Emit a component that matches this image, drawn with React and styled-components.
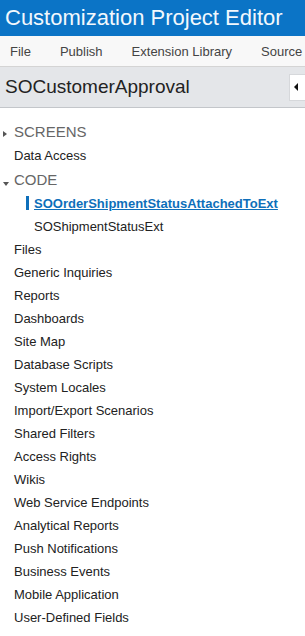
import React from "react";
import styled, { createGlobalStyle } from "styled-components";

const GlobalStyle = createGlobalStyle`
  body {
    margin: 0;
    background: #fff;
    font-family: "Liberation Sans", Arial, sans-serif;
  }
`;

const Page = styled.div`
  width: 305px;
  height: 636px;
  overflow: hidden;
  display: flex;
  flex-direction: column;
`;

const Header = styled.div`
  height: 36px;
  background: #0b74c6;
  color: #f2f8fd;
  font-size: 22px;
  line-height: 36px;
  padding-left: 5px;
  white-space: nowrap;
  flex: none;
`;

const MenuBar = styled.div`
  height: 30px;
  background: #f8f8f8;
  border-bottom: 1px solid #d4d4d4;
  display: flex;
  align-items: center;
  padding-left: 10px;
  gap: 29px;
  white-space: nowrap;
  overflow: hidden;
  flex: none;
`;

const MenuItem = styled.span`
  font-size: 13px;
  color: #444;
`;

const ProjectBar = styled.div`
  height: 40px;
  background: #e4e6e9;
  border-bottom: 1px solid #c3c6ca;
  display: flex;
  align-items: center;
  justify-content: space-between;
  padding-left: 5px;
  flex: none;
`;

const ProjectName = styled.span`
  font-size: 19px;
  color: #222;
`;

const CollapseButton = styled.div`
  width: 16px;
  height: 27px;
  background: #fff;
  border: 1px solid #d6d8db;
  border-right: none;
  display: flex;
  align-items: center;
  padding-left: 4px;
  box-sizing: border-box;
  &::before {
    content: "";
    border-top: 4px solid transparent;
    border-bottom: 4px solid transparent;
    border-right: 4px solid #111;
  }
`;

const Tree = styled.div`
  display: flex;
  flex-direction: column;
  padding-top: 11px;
`;

const Row = styled.div`
  height: ${(p) => (p.$section ? 25 : 23)}px;
  display: flex;
  align-items: center;
  padding-left: ${(p) => (p.$child ? 34 : 14)}px;
  position: relative;
  white-space: nowrap;
  flex: none;
`;

const Toggle = styled.span`
  position: absolute;
  left: 3px;
  top: 50%;
  width: 0;
  height: 0;
  ${(p) =>
    p.$open
      ? `border-left: 3.5px solid transparent;
         border-right: 3.5px solid transparent;
         border-top: 4px solid #555;
         margin-top: 2px;`
      : `border-top: 3.5px solid transparent;
         border-bottom: 3.5px solid transparent;
         border-left: 4px solid #555;
         margin-top: -1px;`}
`;

const Section = styled.span`
  font-size: 15px;
  color: #666;
  text-transform: uppercase;
`;

const Label = styled.span`
  font-size: 13px;
  color: #222;
`;

const ActiveLabel = styled.span`
  font-size: 13px;
  font-weight: bold;
  color: #0e6fba;
  text-decoration: underline;
`;

const ActiveBar = styled.span`
  position: absolute;
  left: 26px;
  top: 4px;
  width: 3px;
  height: 14px;
  background: #0e6fba;
`;

const items = [
  "Files",
  "Generic Inquiries",
  "Reports",
  "Dashboards",
  "Site Map",
  "Database Scripts",
  "System Locales",
  "Import/Export Scenarios",
  "Shared Filters",
  "Access Rights",
  "Wikis",
  "Web Service Endpoints",
  "Analytical Reports",
  "Push Notifications",
  "Business Events",
  "Mobile Application",
  "User-Defined Fields",
  "Webhooks",
];

export default function App() {
  return (
    <Page>
      <GlobalStyle />
      <Header>Customization Project Editor</Header>
      <MenuBar>
        <MenuItem>File</MenuItem>
        <MenuItem>Publish</MenuItem>
        <MenuItem>Extension Library</MenuItem>
        <MenuItem>Source Control</MenuItem>
      </MenuBar>
      <ProjectBar>
        <ProjectName>SOCustomerApproval</ProjectName>
        <CollapseButton />
      </ProjectBar>
      <Tree>
        <Row $section>
          <Toggle />
          <Section>Screens</Section>
        </Row>
        <Row>
          <Label>Data Access</Label>
        </Row>
        <Row $section>
          <Toggle $open />
          <Section>Code</Section>
        </Row>
        <Row $child>
          <ActiveBar />
          <ActiveLabel>SOOrderShipmentStatusAttachedToExt</ActiveLabel>
        </Row>
        <Row $child>
          <Label>SOShipmentStatusExt</Label>
        </Row>
        {items.map((name) => (
          <Row key={name}>
            <Label>{name}</Label>
          </Row>
        ))}
      </Tree>
    </Page>
  );
}
